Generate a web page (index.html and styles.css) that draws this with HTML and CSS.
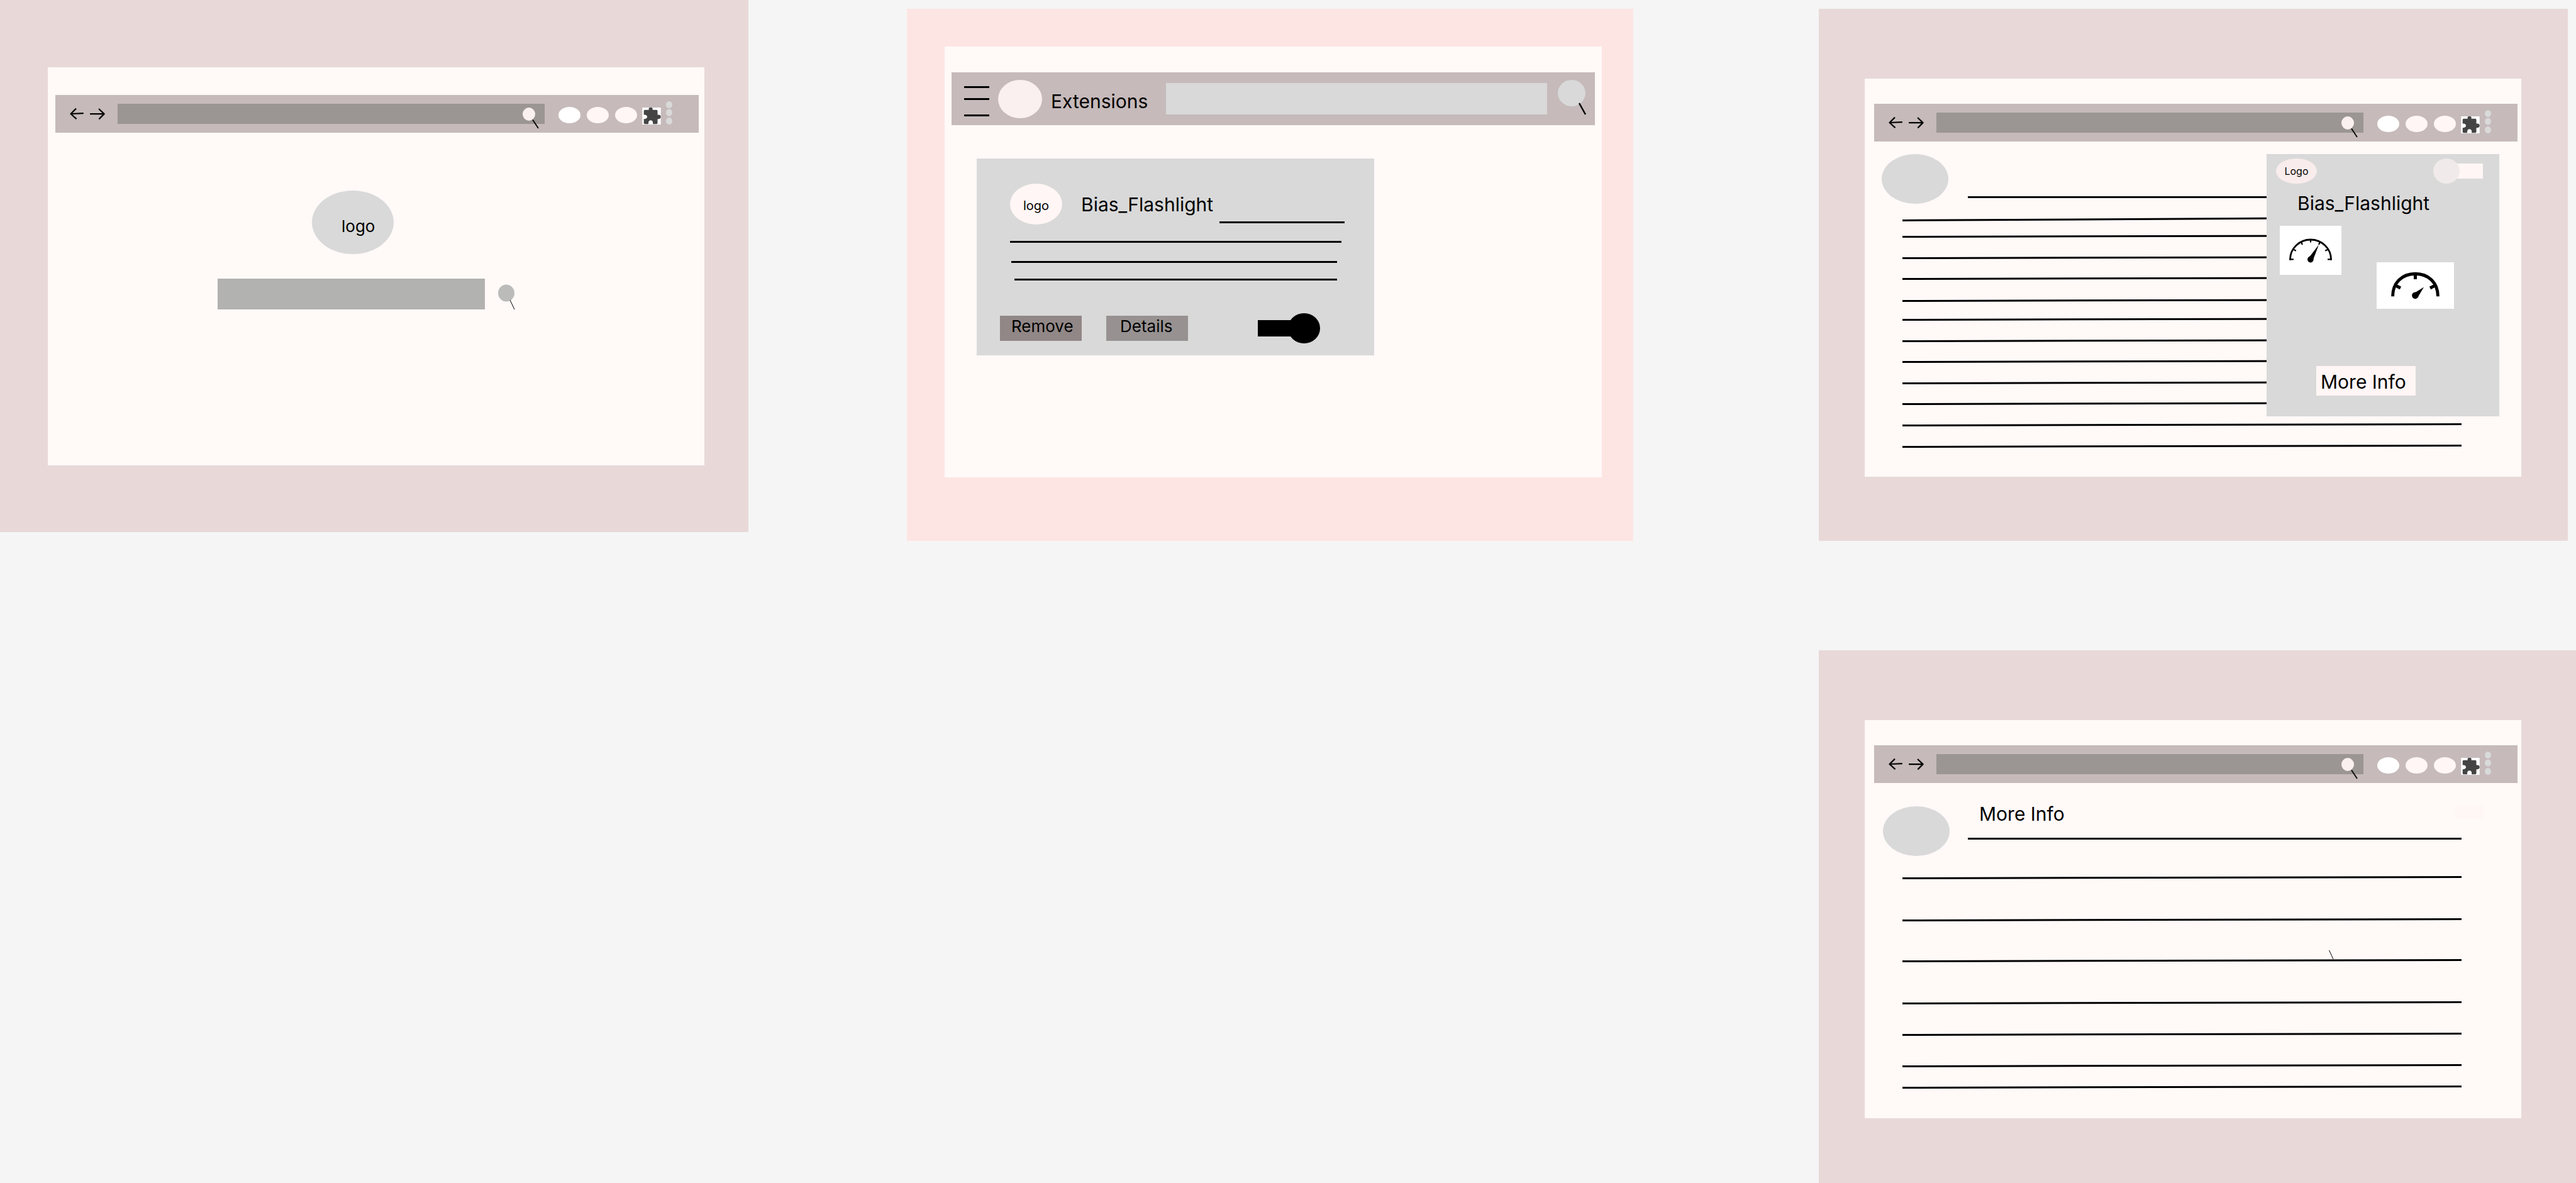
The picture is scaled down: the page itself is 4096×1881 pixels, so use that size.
FILE: index.html
```html
<!DOCTYPE html>
<html lang="en">
<head>
<meta charset="utf-8">
<title>Bias_Flashlight wireframes</title>
<link rel="stylesheet" href="styles.css">
</head>
<body>
<svg class="sprite" aria-hidden="true">
  <symbol id="i-back" viewBox="164 320 83 73"><path d="M243 353.500 L169 356.500 M200 326 L169 356.500 L202 386" fill="none" stroke="#000" stroke-width="8" stroke-linejoin="round"/></symbol>
  <symbol id="i-forward" viewBox="275 320 91 73"><path d="M279 357 H361 M330 327 L361 357 L331 387" fill="none" stroke="#000" stroke-width="8" stroke-linejoin="round"/></symbol>
  <symbol id="i-lens" viewBox="0 0 26 34"><ellipse cx="10" cy="10.500" rx="10" ry="10.400" fill="#faf0ef"/><path d="M16 19.500 L25 33" stroke="#000" stroke-width="1.800"/></symbol>
  <symbol id="i-puzzle" viewBox="0 0 108 99"><path fill="#fff" d="M0 0H108V99H0z"/><path fill="#444" d="M15 14H38V6Q38 0 44 0H54Q60 0 60 6V14H83Q89 14 89 20V42H96C112 42 112 67 96 67H89V90Q89 96 83 96H62V88C62 70 36 70 36 88V96H15Q9 96 9 90V67H13C34 67 34 42 13 42H9V20Q9 14 15 14z"/></symbol>
  <symbol id="i-dots" viewBox="0 0 10 37"><g fill="#d9d9d9"><ellipse cx="5" cy="5.500" rx="5" ry="5.500"/><ellipse cx="5" cy="18" rx="5" ry="5.500"/><ellipse cx="5" cy="31.500" rx="5" ry="5.500"/></g></symbol>
</svg>

<main class="board">

  <section class="screen screen--home">
    <div class="page">
      <header class="bar">
        <button class="icon" aria-label="Back"><svg width="23" height="20"><use href="#i-back"/></svg></button>
        <button class="icon icon--forward" aria-label="Forward"><svg width="25" height="20"><use href="#i-forward"/></svg></button>
        <div class="address">
          <input class="address-input" type="text" aria-label="Address">
          <button class="icon lens" aria-label="Go"><svg width="26" height="34"><use href="#i-lens"/></svg></button>
        </div>
        <div class="pins"><span class="pin pin--white"></span><span class="pin"></span><span class="pin"></span></div>
        <button class="icon puzzle" aria-label="Extensions"><svg width="30" height="27"><use href="#i-puzzle"/></svg></button>
        <button class="icon dots" aria-label="Menu"><svg width="10" height="37"><use href="#i-dots"/></svg></button>
      </header>
      <div class="home">
        <div class="home-logo">logo</div>
        <div class="home-search">
          <input class="home-input" type="text" aria-label="Search">
          <button class="icon" aria-label="Search"><svg width="27" height="40" viewBox="0 0 27 40"><ellipse cx="13" cy="14" rx="13" ry="13.500" fill="#bbbbb9"/><path d="M19 25 L26 40" stroke="#000" stroke-width="1"/></svg></button>
        </div>
      </div>
    </div>
  </section>

  <section class="screen screen--extensions">
    <div class="page">
      <header class="bar bar--tall">
        <button class="icon" aria-label="Main menu"><svg width="40" height="61" viewBox="0 0 40 61"><path d="M0 11.500H40M0 30.500H40M0 56.500H40" stroke="#000" stroke-width="3"/></svg></button>
        <span class="avatar"></span>
        <h1 class="bar-title">Extensions</h1>
        <input class="bar-input" type="text" aria-label="Search extensions">
        <button class="icon" aria-label="Search"><svg width="48" height="61" viewBox="0 0 48 61"><ellipse cx="25" cy="21" rx="22" ry="21" fill="#d9d9d9"/><path d="M37 37 L47 55" stroke="#000" stroke-width="2.500"/></svg></button>
      </header>
      <article class="card">
        <div class="card-head">
          <div class="card-logo">logo</div>
          <h2 class="title">Bias_Flashlight</h2>
          <i class="rule rule--flat"></i>
        </div>
        <div class="card-text">
          <i class="rule rule--flat"></i>
          <i class="rule rule--flat"></i>
          <i class="rule rule--flat"></i>
        </div>
        <div class="card-actions">
          <button class="btn btn--remove">Remove</button>
          <button class="btn btn--details">Details</button>
          <input class="toggle toggle--on" type="checkbox" checked aria-label="Enabled">
        </div>
      </article>
    </div>
  </section>

  <section class="screen screen--article">
    <div class="page">
      <header class="bar">
        <button class="icon" aria-label="Back"><svg width="23" height="20"><use href="#i-back"/></svg></button>
        <button class="icon icon--forward" aria-label="Forward"><svg width="25" height="20"><use href="#i-forward"/></svg></button>
        <div class="address">
          <input class="address-input" type="text" aria-label="Address">
          <button class="icon lens" aria-label="Go"><svg width="26" height="34"><use href="#i-lens"/></svg></button>
        </div>
        <div class="pins"><span class="pin pin--white"></span><span class="pin"></span><span class="pin"></span></div>
        <button class="icon puzzle" aria-label="Extensions"><svg width="30" height="27"><use href="#i-puzzle"/></svg></button>
        <button class="icon dots" aria-label="Menu"><svg width="10" height="37"><use href="#i-dots"/></svg></button>
      </header>
      <div class="article-head">
        <span class="portrait"></span>
        <i class="rule rule--flat"></i>
      </div>
      <div class="lines">
        <i class="rule rule--steep"></i>
        <i class="rule rule--close"></i>
        <i class="rule"></i>
        <i class="rule rule--snug"></i>
        <i class="rule rule--wide"></i>
        <i class="rule rule--tight"></i>
        <i class="rule"></i>
        <i class="rule rule--snug"></i>
        <i class="rule"></i>
        <i class="rule rule--snug"></i>
        <i class="rule"></i>
        <i class="rule"></i>
      </div>
      <aside class="popup">
        <div class="popup-head">
          <div class="popup-logo">Logo</div>
          <input class="toggle toggle--off" type="checkbox" aria-label="Flashlight">
        </div>
        <h2 class="title popup-title">Bias_Flashlight</h2>
        <div class="gauges">
          <svg class="gauge" width="98" height="78" viewBox="0 0 357 273" preserveAspectRatio="none"><g fill="none" stroke="#000" stroke-width="9"><path d="M60 191V187A118.500 110 0 0 1 297 187V191" stroke-width="10"/><path d="M56 187H80M301 187H277M178.500 78V93M125 92L131 105M232 92L226 105M80 132L94 139M277 132L263 139" stroke-width="8"/></g><circle cx="178" cy="187" r="17.500"/><path d="M226 106L168 178L192 192z"/></svg>
          <svg class="gauge gauge--large" width="123" height="74" viewBox="0 0 447 262" preserveAspectRatio="none"><path d="M93 192C93 112 150 65 223.500 65S354 112 354 192" fill="none" stroke="#000" stroke-width="18"/><path d="M223.500 65V96M108 130L138 145M339 130L309 145" stroke="#000" stroke-width="18"/><path d="M273 140L210 178L236 200z"/><circle cx="223" cy="187" r="19"/></svg>
        </div>
        <button class="btn btn--more">More Info</button>
      </aside>
    </div>
  </section>

  <section class="screen screen--info">
    <div class="page">
      <header class="bar">
        <button class="icon" aria-label="Back"><svg width="23" height="20"><use href="#i-back"/></svg></button>
        <button class="icon icon--forward" aria-label="Forward"><svg width="25" height="20"><use href="#i-forward"/></svg></button>
        <div class="address">
          <input class="address-input" type="text" aria-label="Address">
          <button class="icon lens" aria-label="Go"><svg width="26" height="34"><use href="#i-lens"/></svg></button>
        </div>
        <div class="pins"><span class="pin pin--white"></span><span class="pin"></span><span class="pin"></span></div>
        <button class="icon puzzle" aria-label="Extensions"><svg width="30" height="27"><use href="#i-puzzle"/></svg></button>
        <button class="icon dots" aria-label="Menu"><svg width="10" height="37"><use href="#i-dots"/></svg></button>
      </header>
      <div class="article-head info-head">
        <span class="portrait"></span>
        <div class="info-title">
          <h2 class="title">More Info</h2>
          <i class="rule rule--flat"></i>
        </div>
        <span class="patch"></span>
      </div>
      <div class="lines info-lines">
        <i class="rule"></i>
        <i class="rule"></i>
        <i class="rule"></i>
        <i class="rule"></i>
        <i class="rule"></i>
        <i class="rule"></i>
        <i class="rule"></i>
        <svg class="tick" width="8" height="15" viewBox="0 0 8 15" aria-hidden="true"><path d="M0.500 0L7 14" stroke="#000" stroke-width="1"/></svg>
      </div>
    </div>
  </section>

</main>
</body>
</html>
```
FILE: styles.css
```css
* { box-sizing: border-box; }

body {
  margin: 0;
  background: #f5f5f5;
  color: #000;
  font-family: Inter, "Liberation Sans", sans-serif;
}

.sprite { position: absolute; width: 0; height: 0; }

button, input {
  margin: 0;
  padding: 0;
  border: 0;
  border-radius: 0;
  background: none;
  color: inherit;
  font: inherit;
}

h1, h2 { margin: 0; font-weight: 400; font-size: 30px; line-height: 36px; white-space: nowrap; }
svg { display: block; }

/* Board of screens */
.board {
  display: grid;
  grid-template-columns: 1190fr 252fr 1155fr 295fr 1191fr 13fr;
  row-gap: 174px;
  align-items: start;
}

.screen { background: #e8d9d8; }
.screen--home { grid-column: 1; padding: 107px 70px 106px 76px; }
.screen--extensions { grid-column: 3; margin-top: 14px; padding: 60px 50px 101px 60px; background: #fde5e4; }
.screen--article { grid-column: 5; margin-top: 14px; padding: 111px 74px 102px 73px; }
.screen--info { grid-column: 5 / 7; grid-row: 2; padding: 111px 87px 103px 73px; }

.page {
  position: relative;
  min-height: 633px;
  padding: 40px 6px 0 15px;
  background: #fff9f8;
}
.screen--home .page { padding: 44px 9px 0 12px; }
.screen--extensions .page { min-height: 685px; padding: 41px 11px 0; }

/* Browser bar */
.bar {
  display: flex;
  align-items: center;
  height: 60px;
  padding: 0 42px 0 23px;
  background: #c6baba;
}
.icon { flex: none; cursor: pointer; }
.icon--forward { margin-left: 8px; }
.address {
  display: flex;
  flex: 1;
  align-items: flex-start;
  height: 32px;
  margin: 0 22px 0 20px;
  padding-right: 9px;
  background: #9b9594;
}
.address-input { flex: 1; min-width: 0; height: 32px; }
.lens { margin-top: 6px; }
.pins { display: flex; gap: 10px; margin-top: 4px; }
.pin { width: 35px; height: 26px; border-radius: 50%; background: #fff6f5; }
.pin--white { background: #fff; }
.puzzle { margin: 6px 8px 0; }
.dots { margin-bottom: 4px; }

.bar--tall { gap: 14px; height: 84px; padding: 0 14px 0 20px; }
.avatar { flex: none; width: 70px; height: 61px; border-radius: 50%; background: #f9f0ef; }
.bar-title { width: 169px; padding-top: 8px; }
.bar-input { flex: 1; min-width: 0; height: 50px; background: #d9d9d9; }

/* Home */
.home { padding: 92px 0 0 258px; }
.home-logo {
  width: 130px;
  height: 101px;
  margin-left: 150px;
  padding: 41px 0 0 47px;
  border-radius: 50%;
  background: #d9d9d9;
  font-size: 26px;
  line-height: 32px;
}
.home-search { display: flex; align-items: flex-end; gap: 21px; margin-top: 39px; }
.home-input { width: 425px; height: 49px; background: #b2b2b0; }

/* Lines standing for text */
.rule {
  display: block;
  height: 3px;
  background: #000;
  transform: rotate(-0.13deg);
  transform-origin: left;
}
.rule--flat { transform: none; }
.rule--steep { transform: rotate(-0.32deg); }

/* Extension card */
.card {
  width: 632px;
  max-width: 100%;
  margin: 53px 0 0 40px;
  padding: 40px 47px 19px 37px;
  background: #d9d9d9;
}
.card-head { display: flex; align-items: center; margin-left: 16px; }
.card-logo {
  flex: none;
  width: 83px;
  height: 65px;
  margin-right: 30px;
  padding-top: 23px;
  border-radius: 50%;
  background: #fff6f5;
  font-size: 20px;
  line-height: 24px;
  text-align: center;
}
.card-head .rule { flex: 1; align-self: flex-end; margin: 0 0 2px 10px; }
.card-text { padding: 26px 5px 0 16px; }
.card-text .rule + .rule { margin: 29px 7px 0 2px; }
.card-text .rule + .rule + .rule { margin: 25px 7px 0 7px; }
.card-actions { display: flex; align-items: center; margin-top: 52px; }

.btn { flex: none; text-align: left; white-space: nowrap; cursor: pointer; }
.btn--remove, .btn--details { width: 130px; height: 40px; padding-bottom: 6px; font-size: 26px; line-height: 32px; }
.btn--remove { padding-left: 18px; background: #918787; }
.btn--details { margin: 0 111px 0 39px; padding-left: 22px; background: #979291; }

.toggle { display: flex; flex: none; align-items: center; appearance: none; cursor: pointer; }
.toggle::before { content: ""; border-radius: 50%; }
.toggle--on { justify-content: flex-end; width: 99px; height: 48px; background: linear-gradient(#000, #000) 0 50% / 70px 26px no-repeat; }
.toggle--on::before { width: 51px; height: 48px; background: #000; }
.toggle--off { width: 79px; height: 40px; background: linear-gradient(#fff6f5, #fff6f5) 100% 50% / 50px 24px no-repeat; }
.toggle--off::before { width: 42px; height: 40px; background: #f0eaea; }

/* Article */
.article-head { display: flex; gap: 31px; padding: 20px 89px 0 12px; }
.portrait { flex: none; width: 106px; height: 79px; border-radius: 50%; background: #d9d9d9; }
.article-head > .rule { flex: 1; margin-top: 67px; }
.lines { margin: 25px 89px 0 45px; }
.lines .rule + .rule { margin-top: 31px; }
.lines .rule + .rule--snug { margin-top: 30px; }
.lines .rule + .rule--wide { margin-top: 32px; }
.lines .rule + .rule--tight { margin-top: 27px; }
.lines .rule + .rule--close { margin-top: 23px; }

/* Extension popup */
.popup {
  position: absolute;
  top: 120px;
  right: 35px;
  display: flex;
  flex-direction: column;
  align-items: flex-start;
  width: 370px;
  padding: 7px 0 33px;
  background: #d9d9d9;
}
.popup-head { display: flex; align-self: stretch; justify-content: space-between; padding: 0 26px 0 15px; }
.popup-logo {
  width: 65px;
  height: 40px;
  border-radius: 50%;
  background: #f9ecec;
  font-size: 16px;
  line-height: 40px;
  text-align: center;
}
.popup-title { margin: 13px 0 0 49px; }
.gauges { display: flex; align-items: flex-start; gap: 56px; margin: 18px 0 0 21px; }
.gauge { flex: none; background: #fff; }
.gauge--large { margin-top: 58px; }
.btn--more {
  width: 158px;
  height: 47px;
  margin: 91px 0 0 79px;
  padding: 3px 0 0 7px;
  background: #fff6f5;
  font-size: 30px;
  line-height: 36px;
}

/* More info */
.info-head { gap: 0; padding: 31px 54px 0 14px; }
.info-head .portrait { margin: 6px 29px 0 0; }
.info-title { flex: 1; }
.info-title .title { padding-left: 18px; }
.info-title .rule { margin: 20px -10px 0 0; }
.patch { width: 45px; height: 21px; margin-top: 5px; background: #fff7f5; }
.info-lines { position: relative; margin-top: 34px; }
.info-lines .rule + .rule { margin-top: 64px; }
.info-lines .rule:nth-child(3) { margin-top: 62px; }
.info-lines .rule:nth-child(5), .info-lines .rule:nth-child(6) { margin-top: 47px; }
.info-lines .rule:nth-child(7) { margin-top: 31px; }
.tick { position: absolute; top: 116px; left: 678px; }
```
